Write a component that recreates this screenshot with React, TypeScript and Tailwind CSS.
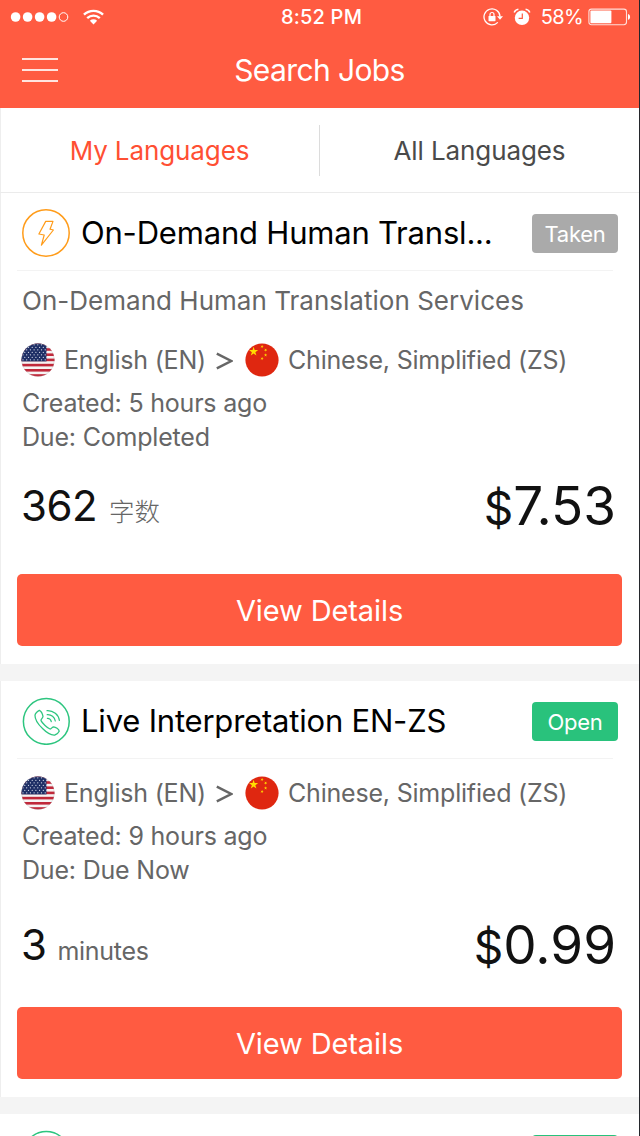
import clsx from "clsx";

interface Job {
  id: number;
  kind: "demand" | "call";
  title: string;
  status: "Taken" | "Open";
  summary?: string;
  created: string;
  due: string;
  amount: string;
  unit: string;
  price: string;
}

const jobs: Job[] = [
  {
    id: 1,
    kind: "demand",
    title: "On-Demand Human Transl...",
    status: "Taken",
    summary: "On-Demand Human Translation Services",
    created: "5 hours ago",
    due: "Completed",
    amount: "362",
    unit: "字数",
    price: "7.53",
  },
  {
    id: 2,
    kind: "call",
    title: "Live Interpretation EN-ZS",
    status: "Open",
    created: "9 hours ago",
    due: "Due Now",
    amount: "3",
    unit: "minutes",
    price: "0.99",
  },
];

const STAR = "M0 -1L.225 -.309H.951L.363 .118L.588 .809L0 .382L-.588 .809L-.363 .118L-.951 -.309H-.225Z";

function WifiIcon() {
  return (
    <svg className="ml-[13px] h-4 w-[21px]" viewBox="0 0 22 16" fill="none" stroke="white" strokeWidth="2.5">
      <path d="M1 5.6C6.6 0.2 15.4 0.2 21 5.6" />
      <path d="M4.4 9.2C8.2 5.6 13.8 5.6 17.6 9.2" />
      <path d="M7.2 11.8C9.4 9.9 12.6 9.9 14.8 11.8L11 15.8Z" fill="white" stroke="none" />
    </svg>
  );
}

function RotationLockIcon() {
  return (
    <svg className="h-[18px] w-5" viewBox="0 0 20 18" fill="none" stroke="white">
      <path d="M14.8 14.4A8 8 0 1 1 17 8.4" strokeWidth="1.3" />
      <path d="M14 8.2H20L17 11.8Z" fill="white" stroke="none" />
      <rect x="5.5" y="8" width="7" height="5.2" rx=".6" fill="white" stroke="none" />
      <path d="M7 8.4V6.5A2 2 0 0 1 11 6.5V8.4" strokeWidth="1.2" />
    </svg>
  );
}

function AlarmIcon() {
  return (
    <svg className="ml-[10px] h-[18px] w-[18px]" viewBox="0 0 18 18">
      <circle cx="9" cy="9.8" r="7.2" fill="white" />
      <path d="M1.2 4.6A5 5 0 0 1 5.4 1.2M16.8 4.6A5 5 0 0 0 12.6 1.2" fill="none" stroke="white" strokeWidth="1.5" />
      <path d="M9.3 5.6V10.3H5.6" fill="none" stroke="#ff5b41" strokeWidth="1.2" />
    </svg>
  );
}

function BatteryIcon() {
  return (
    <svg className="ml-[5px] h-[18px] w-[43px]" viewBox="0 0 43 18">
      <rect x=".9" y="1.1" width="37.6" height="15.6" rx="2.6" fill="none" stroke="white" strokeOpacity=".8" strokeWidth="1.1" />
      <rect x="2.4" y="2.6" width="21" height="12.6" rx="1" fill="white" />
      <path d="M40 6C42.8 6.6 42.8 11.2 40 11.8Z" fill="white" />
    </svg>
  );
}

function StatusBar() {
  return (
    <div className="grid h-8 grid-cols-[1fr_auto_1fr] items-center pt-px text-xl text-white">
      <div className="flex items-center pl-[10px]">
        <svg className="h-[10px] w-[60px]" viewBox="0 0 60 10" fill="white">
          <circle cx="5.6" cy="5" r="4.8" />
          <circle cx="17.6" cy="5" r="4.8" />
          <circle cx="29.6" cy="5" r="4.8" />
          <circle cx="41.6" cy="5" r="4.8" />
          <circle cx="53.5" cy="5" r="4.3" fill="none" stroke="white" strokeWidth="1" />
        </svg>
        <WifiIcon />
      </div>
      <span className="pl-1 font-medium tracking-[0.2px]">8:52 PM</span>
      <div className="flex items-center justify-end pr-2">
        <RotationLockIcon />
        <AlarmIcon />
        <span className="ml-[10px] tracking-[-0.6px]">58%</span>
        <BatteryIcon />
      </div>
    </div>
  );
}

function NavBar() {
  return (
    <div className="grid h-[76px] grid-cols-[1fr_auto_1fr] items-center">
      <button className="ml-[22px] flex h-[24px] w-9 flex-col justify-between">
        <span className="h-0.5 w-full bg-[#ffe4e0]" />
        <span className="h-0.5 w-full bg-[#ffe4e0]" />
        <span className="h-0.5 w-full bg-[#ffe4e0]" />
      </button>
      <h1 className="text-[30px] leading-9 tracking-[-0.6px] text-white">Search Jobs</h1>
    </div>
  );
}

function Tabs() {
  return (
    <div className="flex h-[85px] items-center border-b border-[#ebebeb] text-[26px] tracking-[-0.1px] shadow-[inset_1px_0_0_#eeeeee]">
      <button className="flex-1 text-[#ff4f33]">My Languages</button>
      <span className="h-[51px] w-px bg-[#dcdcdc]" />
      <button className="flex-1 text-[#4a4a4a]">All Languages</button>
    </div>
  );
}

function JobIcon({ kind }: { kind: Job["kind"] }) {
  if (kind === "demand") {
    return (
      <svg className="size-12 shrink-0" viewBox="0 0 48 48" fill="none" stroke="#ff9c1a" strokeLinejoin="round">
        <circle cx="24" cy="24" r="23.2" strokeWidth="1.5" />
        <path d="M23.7 12.4H31L28 20.2L31.4 21L19.4 36.2L22.2 26L16.9 25Z" strokeWidth="1.2" />
      </svg>
    );
  }
  return (
    <svg className="size-12 shrink-0" viewBox="0 0 48 48" fill="none" stroke="#2dc57f" strokeLinecap="round" strokeLinejoin="round">
      <circle cx="24.3" cy="24.4" r="22.9" strokeWidth="1.5" />
      <path
        d="M17.4 13.4C15.6 14.4 13.2 16 13 18.4C12.8 23.4 17.2 28.4 20.8 31.8C24.2 35.2 28.8 38.4 32.8 38C35 37.6 36.4 35.8 37.2 34.2C37.2 32.2 33.4 30 31.6 29.8C30.2 29.8 29.4 32.2 28 32C25.4 31.2 20.4 26.4 19 23.6C18.6 22 21.2 20.8 21 19.4C20.6 17.4 19.2 14.2 17.4 13.4Z"
        strokeWidth="1.3"
      />
      <path d="M25 13.6C31.2 13.2 36.8 17.8 37.4 23.4" strokeWidth="1.2" />
      <path d="M25.2 17.6C29.2 17.2 32.8 20.4 33.3 24" strokeWidth="1.2" />
      <path d="M25.4 21.4C27.2 21.2 29 22.8 29.3 24.6" strokeWidth="1.2" />
    </svg>
  );
}

function StatusBadge({ status, label = true }: { status: Job["status"]; label?: boolean }) {
  return (
    <span
      className={clsx(
        "ml-auto flex h-[39px] w-[86px] items-center justify-center rounded-[4px] pt-0.5 text-[22px] tracking-[-0.3px] text-white",
        status === "Open" ? "bg-[#29c27c]" : "bg-[#aaaaaa]"
      )}
    >
      {label && status}
    </span>
  );
}

function UsFlag() {
  return (
    <svg className="size-[34px]" viewBox="0 0 34 34">
      <clipPath id="us-round">
        <circle cx="17" cy="17" r="16.6" />
      </clipPath>
      <g clipPath="url(#us-round)">
        <rect width="34" height="34" fill="#f6f4f4" />
        {[0, 1, 2, 3, 4, 5, 6].map((i) => (
          <rect key={i} y={i * 5.2} width="34" height="2.6" fill="#c0283a" />
        ))}
        <rect width="25.5" height="18.4" fill="#1f2f66" />
        {[0, 1, 2, 3, 4, 5, 6].map((row) =>
          [0, 1, 2, 3, 4, 5, 6].map((col) => (
            <circle key={`${row}-${col}`} cx={2 + col * 3.7 + (row % 2) * 1.8} cy={1.8 + row * 2.5} r=".62" fill="#e4e7f2" />
          ))
        )}
      </g>
      <circle cx="17" cy="17" r="16.4" fill="none" stroke="#9b9b9b" strokeOpacity=".35" strokeWidth=".6" />
    </svg>
  );
}

function ChinaFlag() {
  return (
    <svg className="size-[34px]" viewBox="0 0 34 34" fill="#ffde00">
      <circle cx="17" cy="17" r="16.6" fill="#df2710" />
      <path d={STAR} transform="translate(8.6 8.6) scale(4.8)" />
      <path d={STAR} transform="translate(17 3.6) rotate(20) scale(1.7)" />
      <path d={STAR} transform="translate(20.6 7) rotate(40) scale(1.7)" />
      <path d={STAR} transform="translate(20.6 12) scale(1.7)" />
      <path d={STAR} transform="translate(17 15.6) rotate(20) scale(1.7)" />
    </svg>
  );
}

interface JobCardHeaderProps {
  kind: Job["kind"];
  status: Job["status"];
  title?: string;
}

function JobCardHeader({ kind, status, title }: JobCardHeaderProps) {
  return (
    <div className="mr-[26px] ml-[17px] h-[78px] border-b border-[#f3f3f3] pt-[3px]">
      <div className="-mr-[5px] flex h-full items-center pl-[5px]">
        <JobIcon kind={kind} />
        {title && (
          <h2 className="ml-[11px] text-[31px] leading-9 tracking-[-0.2px] whitespace-nowrap text-black">{title}</h2>
        )}
        <StatusBadge status={status} label={Boolean(title)} />
      </div>
    </div>
  );
}

function JobCard({ job }: { job: Job }) {
  return (
    <section className="bg-white pb-[18px] shadow-[inset_1px_0_0_#eeeeee]">
      <JobCardHeader kind={job.kind} status={job.status} title={job.title} />
      <div
        className={clsx(
          "pl-[22px] text-[25px] leading-[34px] tracking-[-0.2px] text-[#666666]",
          job.summary ? "pt-[13px]" : "pt-[17px]"
        )}
      >
        {job.summary && <p className="mb-[25px] text-[26px] tracking-[0.02px] whitespace-nowrap">{job.summary}</p>}
        <div className="-ml-px mb-[10px] flex h-[33px] items-center whitespace-nowrap">
          <UsFlag />
          <span className="ml-[9px] w-[141px] pt-px">English (EN)</span>
          <svg className="mr-[12px] ml-[11px] mt-[3px] h-[18px] w-[17px]" viewBox="0 0 17 18" fill="none" stroke="#666666" strokeWidth="2.4">
            <path d="M.8 1.6L15.2 9L.8 16.4" />
          </svg>
          <ChinaFlag />
          <span className="ml-[9px] pt-px">Chinese, Simplified (ZS)</span>
        </div>
        <p>Created: {job.created}</p>
        <p>Due: {job.due}</p>
      </div>
      {/* Amount and price */}
      <div
        className={clsx(
          "flex h-[120px] items-center justify-between pr-[23px] pl-[21px] text-[#111111]",
          job.summary ? "pb-[15px]" : "pb-[3px]"
        )}
      >
        <div className="flex items-baseline pt-1 leading-[50px]">
          <span className="text-[42px] tracking-[-0.5px]">{job.amount}</span>
          <span className={clsx("text-[#666666]", job.summary ? "ml-3 text-[25.5px] font-light" : "ml-[11px] text-[25px] tracking-[-0.3px]")}>
            {job.unit}
          </span>
        </div>
        <div className="flex items-baseline leading-[60px]">
          <span className="text-[46px]">$</span>
          <span className="text-[53px]">{job.price}</span>
        </div>
      </div>
      <button className="mx-[17px] h-[72px] w-[605px] rounded-[5px] bg-[#ff5b41] pt-0.5 text-[29px] tracking-[-0.1px] text-white">
        View Details
      </button>
    </section>
  );
}

export default function App() {
  return (
    <div className="h-[1136px] w-[640px] overflow-hidden border-r border-[#24262b] bg-[#f4f4f4] font-['Inter','Noto_Sans_CJK_SC',sans-serif]">
      <header className="bg-[#ff5b41]">
        <StatusBar />
        <NavBar />
      </header>
      <main className="flex flex-col gap-[17px]">
        <div className="bg-white">
          <Tabs />
          <JobCard job={jobs[0]} />
        </div>
        <JobCard job={jobs[1]} />
        {/* Next job, only its top edge is on screen */}
        <div className="bg-white">
          <JobCardHeader kind="call" status="Open" />
        </div>
      </main>
    </div>
  );
}
